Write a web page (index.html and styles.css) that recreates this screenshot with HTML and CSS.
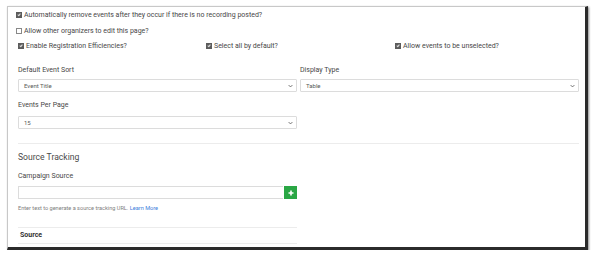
FILE: index.html
```html
<!DOCTYPE html>
<html>
<head>
<meta charset="utf-8">
<link rel="stylesheet" href="styles.css">
</head>
<body>
<div class="frame">
  <div class="content">
    <div class="check-row r1"><span class="cb on"></span><span>Automatically remove events after they occur if there is no recording posted?</span></div>
    <div class="check-row r2"><span class="cb"></span><span>Allow other organizers to edit this page?</span></div>
    <div class="three r3">
      <div class="check-row"><span class="cb on"></span><span>Enable Registration Efficiencies?</span></div>
      <div class="check-row"><span class="cb on"></span><span>Select all by default?</span></div>
      <div class="check-row"><span class="cb on"></span><span>Allow events to be unselected?</span></div>
    </div>
    <div class="two sorts">
      <div class="field">
        <div class="label">Default Event Sort</div>
        <div class="select"><span>Event Title</span><svg class="chev" viewBox="0 0 8 5" width="5" height="4"><path d="M1 1l3 3 3-3" fill="none" stroke="#555" stroke-width="1.3"/></svg></div>
      </div>
      <div class="field">
        <div class="label">Display Type</div>
        <div class="select"><span>Table</span><svg class="chev" viewBox="0 0 8 5" width="5" height="4"><path d="M1 1l3 3 3-3" fill="none" stroke="#555" stroke-width="1.3"/></svg></div>
      </div>
    </div>
    <div class="two perpage">
      <div class="field">
        <div class="label">Events Per Page</div>
        <div class="select"><span>15</span><svg class="chev" viewBox="0 0 8 5" width="5" height="4"><path d="M1 1l3 3 3-3" fill="none" stroke="#555" stroke-width="1.3"/></svg></div>
      </div>
    </div>
    <hr class="rule full">
    <div class="section-title">Source Tracking</div>
    <div class="label campaign">Campaign Source</div>
    <div class="half">
      <div class="input-group">
        <div class="input"></div>
        <div class="add-btn"><svg viewBox="0 0 6 6" width="6" height="6"><path d="M3 0.5v5M0.5 3h5" stroke="#fff" stroke-width="1.6"/></svg></div>
      </div>
      <div class="help">Enter text to generate a source tracking URL. <a href="#">Learn More</a></div>
      <hr class="rule table-top">
      <div class="th">Source</div>
      <hr class="rule table-bot">
    </div>
  </div>
</div>
</body>
</html>
```

FILE: styles.css
```css
html, body {
  margin: 0;
  padding: 0;
  background: #fff;
}
body {
  font-family: Roboto, "Liberation Sans", sans-serif;
  color: #474747;
  font-size: 7px;
}
.frame {
  margin: 6px 0 0 7px;
  width: 577px;
  height: 240px;
  border-top: 1px solid #c8c8c8;
  border-left: 1px solid #c8c8c8;
  border-right: 3px solid #2b2b2b;
  border-bottom: 3px solid #2b2b2b;
  box-shadow: 1px 1px 2px rgba(0,0,0,0.45);
  background: #fff;
  overflow: hidden;
}
.content {
  padding: 3px 0 0 8px;
  width: 563px;
}
.check-row {
  display: flex;
  align-items: center;
  gap: 2px;
  height: 10px;
  line-height: 10px;
  white-space: nowrap;
}
.r2 { margin-top: 6px; }
.r3 { margin-top: 5px; }
.cb {
  width: 4px;
  height: 4px;
  border: 0.5px solid #888;
  background: #fff;
  display: inline-block;
  flex: none;
  position: relative;
}
.cb.on {
  background: #5c5c5c;
  border-color: #5c5c5c;
}
.cb.on::after {
  content: "";
  position: absolute;
  left: 1px;
  top: 0.3px;
  width: 1.2px;
  height: 2.2px;
  border-right: 0.8px solid #ddd;
  border-bottom: 0.8px solid #ddd;
  transform: rotate(40deg);
}
.three {
  display: grid;
  grid-template-columns: 188px 189px 186px;
  padding-left: 2px;
}
.two {
  display: grid;
  grid-template-columns: 279px 279px;
  column-gap: 3px;
  padding-left: 2px;
}
.sorts { margin-top: 14px; }
.perpage { margin-top: 8px; }
.label {
  height: 10px;
  line-height: 10px;
}
.select {
  margin-top: 4px;
  height: 11px;
  border: 1px solid #dcdcdc;
  border-radius: 1px;
  display: flex;
  align-items: center;
  justify-content: space-between;
  padding: 0 3px 0 5px;
  font-size: 6px;
  color: #5a5a5a;
}
.perpage .select { margin-top: 6px; }
.chev { display: block; }
.rule {
  border: none;
  border-top: 1px solid #ececec;
  margin: 0;
}
.full {
  margin: 14px 0 0 2px;
  width: 561px;
}
.section-title {
  margin: 6px 0 0 2px;
  height: 14px;
  line-height: 14px;
  font-size: 8.6px;
  color: #4a4a4a;
}
.campaign {
  margin: 7px 0 0 2px;
}
.half {
  width: 279px;
  margin-left: 2px;
}
.input-group {
  margin-top: 5px;
  display: flex;
  height: 13px;
}
.input {
  flex: 1;
  border: 1px solid #dcdcdc;
  border-right: none;
}
.add-btn {
  width: 13px;
  height: 13px;
  background: #2aa745;
  display: flex;
  align-items: center;
  justify-content: center;
  margin-left: 1px;
}
.add-btn svg { display: block; }
.help {
  margin-top: 5px;
  height: 8px;
  line-height: 8px;
  font-size: 5.6px;
  color: #808080;
}
.help a {
  color: #3d7edb;
  text-decoration: none;
}
.table-top { margin-top: 15px; }
.th {
  margin-top: 2px;
  height: 10px;
  line-height: 10px;
  padding-left: 2px;
  font-weight: 700;
  color: #333;
}
.table-bot { margin-top: 3px; }
```
